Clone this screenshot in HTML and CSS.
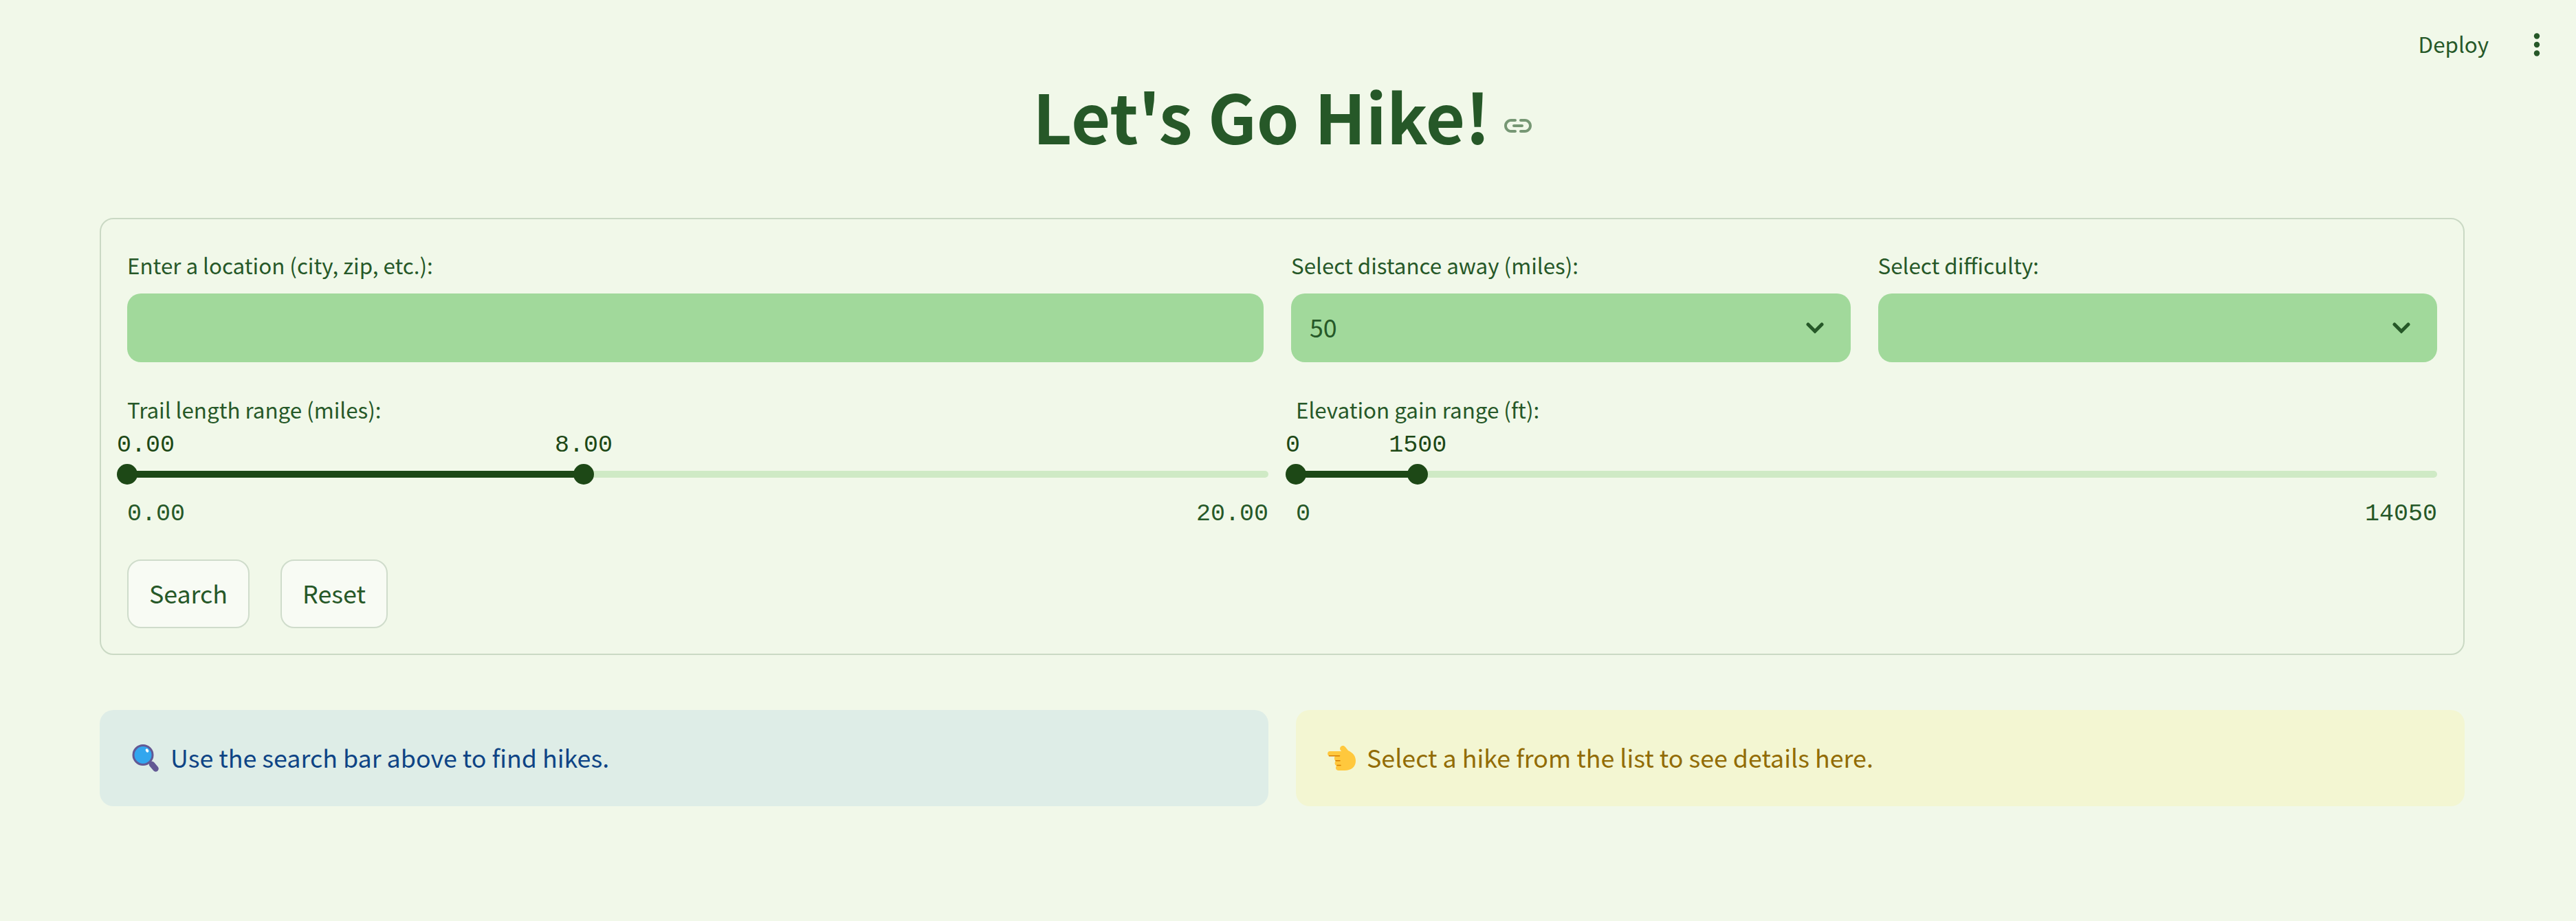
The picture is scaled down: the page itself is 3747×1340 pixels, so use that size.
FILE: index.html
```html
<!DOCTYPE html>
<html lang="en">
<head>
<meta charset="utf-8">
<title>Let's Go Hike!</title>
<link rel="stylesheet" href="styles.css">
</head>
<body>
<header class="toolbar">
  <span class="deploy">Deploy</span>
  <svg class="menu-icon" viewBox="0 0 40 40"><circle cx="20" cy="7.5" r="4.2"/><circle cx="20" cy="20" r="4.2"/><circle cx="20" cy="32.5" r="4.2"/></svg>
</header>
<main class="page">
  <div class="heading">
    <h1>Let's Go Hike!</h1>
    <svg class="link-icon" viewBox="0 0 24 24"><path d="M17 7h-3c-.55 0-1 .45-1 1s.45 1 1 1h3c1.65 0 3 1.35 3 3s-1.35 3-3 3h-3c-.55 0-1 .45-1 1s.45 1 1 1h3c2.76 0 5-2.24 5-5s-2.24-5-5-5zm-9 5c0 .55.45 1 1 1h6c.55 0 1-.45 1-1s-.45-1-1-1H9c-.55 0-1 .45-1 1zm2 3H7c-1.65 0-3-1.35-3-3s1.35-3 3-3h3c.55 0 1-.45 1-1s-.45-1-1-1H7c-2.76 0-5 2.24-5 5s2.24 5 5 5h3c.55 0 1-.45 1-1s-.45-1-1-1z"/></svg>
  </div>
  <section class="form">
    <div class="fields">
      <div class="field">
        <div class="label">Enter a location (city, zip, etc.):</div>
        <div class="control"></div>
      </div>
      <div class="field">
        <div class="label">Select distance away (miles):</div>
        <div class="control"><span>50</span>
          <svg class="chevron" viewBox="0 0 26 16"><path d="M3 3l10 10L23 3"/></svg></div>
      </div>
      <div class="field">
        <div class="label">Select difficulty:</div>
        <div class="control"><span></span>
          <svg class="chevron" viewBox="0 0 26 16"><path d="M3 3l10 10L23 3"/></svg></div>
      </div>
    </div>
    <div class="sliders">
      <div class="slider">
        <div class="label">Trail length range (miles):</div>
        <div class="track">
          <div class="fill" style="width:40%"></div>
          <div class="thumb" style="left:0%"><span class="value at-start">0.00</span></div>
          <div class="thumb" style="left:40%"><span class="value">8.00</span></div>
        </div>
        <div class="limits"><span>0.00</span><span>20.00</span></div>
      </div>
      <div class="slider">
        <div class="label">Elevation gain range (ft):</div>
        <div class="track">
          <div class="fill" style="width:10.676%"></div>
          <div class="thumb" style="left:0%"><span class="value at-start">0</span></div>
          <div class="thumb" style="left:10.676%"><span class="value">1500</span></div>
        </div>
        <div class="limits"><span>0</span><span>14050</span></div>
      </div>
    </div>
    <div class="actions">
      <button class="search">Search</button>
      <button class="reset">Reset</button>
    </div>
  </section>
  <section class="notices">
    <div class="notice info">
      <svg class="emoji" viewBox="0 0 44 44"><path d="M27 28l10 9" stroke="#635994" stroke-width="3" stroke-linecap="round"/><path d="M31 31l5.500 6.500" stroke="#635994" stroke-width="8.500" stroke-linecap="round"/><circle cx="18" cy="17.500" r="14" fill="#32a6ee" stroke="#635994" stroke-width="3"/><ellipse cx="24" cy="11" rx="2" ry="2.800" transform="rotate(-25 24 11)" fill="#fff"/></svg>
      <span>Use the search bar above to find hikes.</span>
    </div>
    <div class="notice warning">
      <svg class="emoji" viewBox="0 0 44 44"><path d="M19.500 10C17.500 5 24 1.500 27 6l4 5c7 3 11 8 11 15 0 9-7 14-16 14H17c-4 0-5-4-3-7-3-1-3-5-1-7-2-1-3-4-1-7H4.500c-4.500 0-4.500-7 0-7H20c2 0 .5-.5-.5-2z" fill="#ffc83d"/><path d="M3.500 18.700h15M13 25.700h6M15 32.500h5" fill="none" stroke="#d67d00" stroke-width="1.600" stroke-linecap="round"/></svg>
      <span>Select a hike from the list to see details here.</span>
    </div>
  </section>
</main>
</body>
</html>
```
FILE: styles.css
```css
* { box-sizing: border-box; }
body {
  margin: 0;
  background: #f1f8e9;
  color: #265828;
  font-family: "Noto Sans CJK SC", "Noto Sans", sans-serif;
  font-size: 35.8px;
}
.toolbar {
  height: 101px;
  padding: 0 37px 0 0;
  display: flex;
  justify-content: flex-end;
  align-items: flex-start;
}
.deploy { font-size: 31.33px; line-height: 52px; margin: 38px 50px 0 0; }
.menu-icon { width: 40px; height: 40px; margin-top: 45px; fill: #265828; }
.page { padding: 0 162px 0 145px; }
.heading {
  height: 132px;
  display: flex;
  justify-content: center;
  padding-left: 4px;
}
h1 { margin: 0; font-size: 98.8px; line-height: 132px; font-weight: 700; white-space: nowrap; }
.link-icon { width: 48px; height: 48px; margin: 58px 0 0 16px; fill: #265828; opacity: .6; }
.form {
  margin-top: 84px;
  height: 636px;
  border: 2px solid #cad9c4;
  border-radius: 20px;
  padding: 40px 38px 37px;
}
.label { height: 52px; font-size: 31.33px; line-height: 54px; white-space: nowrap; }
.fields { display: grid; grid-template-columns: 1653fr 813.5fr 813.5fr; gap: 40px; }
.control {
  margin-top: 16px;
  height: 100px;
  border-radius: 20px;
  background: #a1d99b;
  padding: 0 39px 0 27px;
  display: flex;
  align-items: center;
  justify-content: space-between;
}
.control span { padding-bottom: 4px; }
.chevron { width: 26px; height: 16px; fill: none; stroke: #265828; stroke-width: 5; stroke-linecap: round; }
.sliders { display: grid; grid-template-columns: 1fr 1fr; gap: 40px; margin-top: 42px; }
.track { position: relative; height: 10px; margin-top: 64px; border-radius: 5px; background: #cfeac5; }
.fill { height: 10px; border-radius: 5px; background: #1d4816; }
.thumb {
  position: absolute;
  top: -10px;
  width: 30px;
  height: 30px;
  margin-left: -15px;
  border-radius: 50%;
  background: #1d4816;
}
.value, .limits { font-family: "Liberation Mono", monospace; font-size: 35px; line-height: 48px; }
.value { position: absolute; bottom: 33px; left: 50%; transform: translateX(-50%); color: #1d4816; }
.value.at-start { left: 0; transform: none; }
.limits { display: flex; justify-content: space-between; margin: 29px 0 2px; }
.actions { display: flex; gap: 45px; margin-top: 40px; }
button {
  height: 100px;
  padding: 0 0 4px;
  border: 2px solid #cfdccb;
  border-radius: 20px;
  background: #f8fbf4;
  color: inherit;
  font: inherit;
}
.search { width: 178px; }
.reset { width: 156px; }
.notices { display: grid; grid-template-columns: 1fr 1fr; gap: 40px; margin-top: 80px; }
.notice {
  height: 140px;
  border-radius: 20px;
  padding: 0 45px;
  display: flex;
  align-items: center;
  gap: 14px;
  white-space: nowrap;
}
.notice span { padding-bottom: 4px; }
.emoji { width: 44px; height: 44px; fill: none; }
.info { background: #deede7; color: #0e4485; }
.warning { background: #f3f6d2; color: #926c05; }
```
